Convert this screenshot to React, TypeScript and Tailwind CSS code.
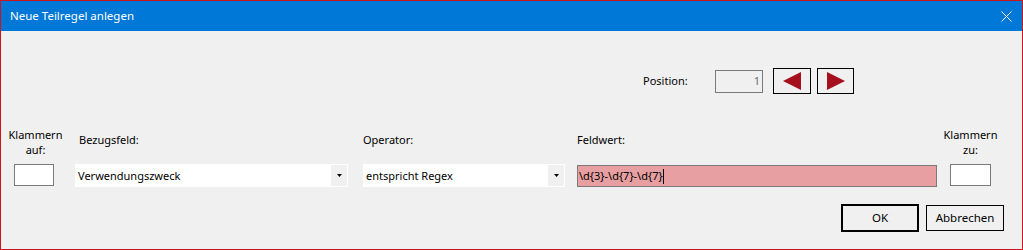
import React from "react";

const font = { fontFamily: '"Segoe UI", "Noto Sans", "Open Sans", sans-serif' };

function Combo({ value, width }: { value: string; width: string }) {
  return (
    <div className={`${width} h-[23px] bg-white flex items-center`}>
      <span className="flex-1 pl-[3px] text-[11px] text-black whitespace-nowrap">{value}</span>
      <div className="w-[16px] h-[21px] mr-[1px] bg-[#f0f0f0] flex items-center justify-center">
        <svg width="5" height="3" viewBox="0 0 5 3">
          <path d="M0 0H5L2.5 3Z" fill="#000" />
        </svg>
      </div>
    </div>
  );
}

export default function App() {
  return (
    <div
      className="w-[1023px] h-[250px] border border-[#c8161d] flex flex-col bg-[#f0f0f0] text-[11px] text-black leading-[16px]"
      style={font}
    >
      {/* title bar */}
      <div className="h-[30px] bg-[#0078d7] flex items-center justify-between pl-[9px] pr-[10px]">
        <span className="text-white text-[11.5px]">Neue Teilregel anlegen</span>
        <svg width="11" height="11" viewBox="0 0 11 11">
          <path d="M0.5 0.5L10.5 10.5M10.5 0.5L0.5 10.5" stroke="#fff" strokeWidth="1" />
        </svg>
      </div>

      {/* position row */}
      <div className="mt-[37px] h-[26px] flex items-center pl-[642px]">
        <span className="w-[72px]">Position:</span>
        <div className="w-[48px] h-[23px] border border-[#7a7a7a] bg-[#f0f0f0] flex items-center justify-end pr-[2px] text-[#6d6d6d]">
          1
        </div>
        <button className="ml-[10px] w-[38px] h-[26px] border border-black flex items-center justify-center bg-[#f0f0f0]">
          <svg width="18" height="18" viewBox="0 0 18 18">
            <path d="M0 9L18 0V18Z" fill="#a50f1e" />
          </svg>
        </button>
        <button className="ml-[6px] w-[37px] h-[26px] border border-black flex items-center justify-center bg-[#f0f0f0]">
          <svg width="18" height="18" viewBox="0 0 18 18">
            <path d="M18 9L0 0V18Z" fill="#a50f1e" />
          </svg>
        </button>
      </div>

      {/* fields row */}
      <div className="mt-[30px] flex items-start">
        <div className="ml-[13px] w-[40px] flex flex-col items-center">
          <div className="h-[40px] pt-[3px] pl-[3px] text-center leading-[15px] whitespace-nowrap">
            Klammern
            <br />
            auf:
          </div>
          <div className="w-[40px] h-[22px] border border-[#7a7a7a] bg-white" />
        </div>
        <div className="ml-[21px] flex flex-col">
          <div className="h-[40px] pt-[8px] pl-[4px]">Bezugsfeld:</div>
          <Combo value="Verwendungszweck" width="w-[273px]" />
        </div>
        <div className="ml-[15px] flex flex-col">
          <div className="h-[40px] pt-[8px]">Operator:</div>
          <Combo value="entspricht Regex" width="w-[202px]" />
        </div>
        <div className="ml-[12px] flex flex-col">
          <div className="h-[40px] pt-[8px]">Feldwert:</div>
          <div className="w-[360px] h-[22px] mt-[1px] border border-[#7a7a7a] bg-[#e79fa1] flex items-center pl-[1px]">
            <span>{"\\d{3}-\\d{7}-\\d{7}"}</span>
            <span className="w-[1px] h-[15px] bg-black" />
          </div>
        </div>
        <div className="ml-[13px] w-[41px] flex flex-col items-center">
          <div className="h-[40px] pt-[3px] text-center leading-[15px] whitespace-nowrap">
            Klammern
            <br />
            zu:
          </div>
          <div className="w-[41px] h-[22px] border border-[#7a7a7a] bg-white" />
        </div>
      </div>

      {/* buttons */}
      <div className="mt-[17px] flex items-center justify-end pr-[18px]">
        <button className="w-[78px] h-[28px] border-2 border-black bg-[#f0f0f0] text-[11.5px]">OK</button>
        <button className="ml-[7px] w-[78px] h-[26px] border border-black bg-[#f0f0f0] text-[11.5px]">
          Abbrechen
        </button>
      </div>
    </div>
  );
}
